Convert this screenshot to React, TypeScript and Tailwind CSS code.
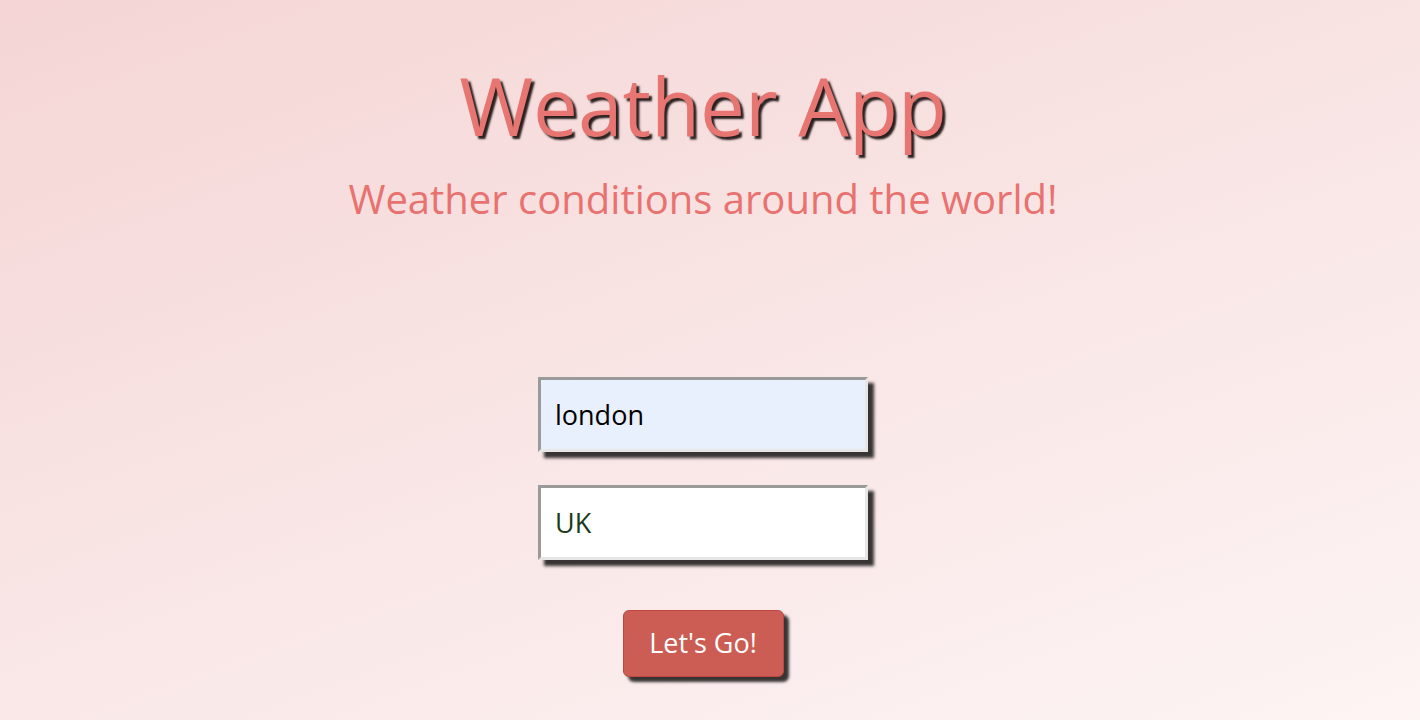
import React, { useState } from 'react';

const App: React.FC = () => {
  const [city, setCity] = useState('london');
  const [country, setCountry] = useState('UK');

  return (
    <div className="min-h-[720px] w-full bg-[linear-gradient(160deg,#f5d5d5_0%,#f9e5e5_50%,#fdf4f4_100%)] font-['Open_Sans',sans-serif]">
      <div className="flex flex-col items-center pr-[14px]">
        {/* Header */}
        <h1 className="mt-[65px] text-[80px] leading-none text-[#e77672] [text-shadow:3px_3px_2px_#2a2020]">
          Weather App
        </h1>
        <p className="mt-[34px] text-[40px] leading-none text-[#e8726f]">
          Weather conditions around the world!
        </p>

        {/* Form */}
        <form className="mt-[158px] flex flex-col items-center" onSubmit={(e) => e.preventDefault()}>
          <input
            value={city}
            onChange={(e) => setCity(e.target.value)}
            className="w-[330px] h-[75px] px-[14px] border-[3px] border-t-[#9a9a9a] border-l-[#9a9a9a] border-b-[#e6e6e6] border-r-[#e6e6e6] bg-[#e8f0fe] text-[27px] text-black outline-none shadow-[6px_6px_3px_#383434]"
          />
          <input
            value={country}
            onChange={(e) => setCountry(e.target.value)}
            className="mt-[33px] w-[330px] h-[75px] px-[14px] border-[3px] border-t-[#9a9a9a] border-l-[#9a9a9a] border-b-[#e6e6e6] border-r-[#e6e6e6] bg-white text-[27px] text-[#1c3a18] outline-none shadow-[6px_6px_3px_#383434]"
          />
          <button
            type="submit"
            className="mt-[50px] w-[161px] h-[67px] pb-[1px] rounded-[6px] border border-[#c0463e] bg-[#cb5d54] text-[27px] text-white shadow-[5px_5px_3px_#383434]"
          >
            Let's Go!
          </button>
        </form>
      </div>
    </div>
  );
};

export default App;
